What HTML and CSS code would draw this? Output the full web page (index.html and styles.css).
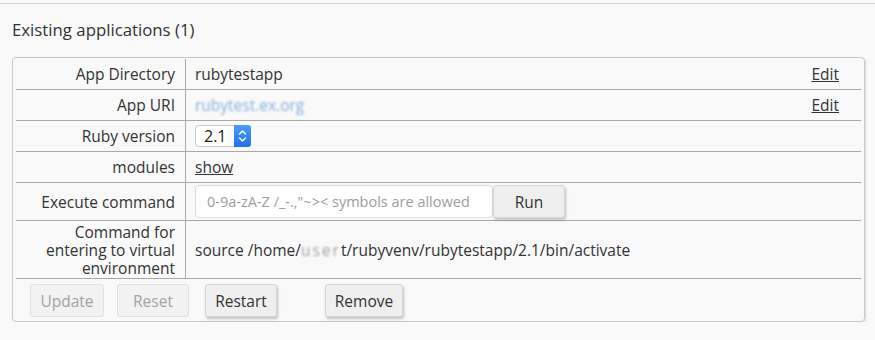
FILE: index.html
```html
<!DOCTYPE html>
<html lang="en">
<head>
    <meta charset="UTF-8">
    <meta name="viewport" content="width=device-width, initial-scale=1.0">
    <title>Ruby applications</title>
    <link rel="stylesheet" href="styles.css">
</head>
<body>
    <div class="section">
        <h2 class="section-title">Existing applications (1)</h2>
        <div class="app-box">
            <table class="app-table">
                <tr>
                    <td class="label">App Directory</td>
                    <td class="value">rubytestapp</td>
                    <td class="edit"><a href="#">Edit</a></td>
                </tr>
                <tr>
                    <td class="label">App URI</td>
                    <td class="value"><span class="blurred uri">rubytest.ex.org</span></td>
                    <td class="edit"><a href="#">Edit</a></td>
                </tr>
                <tr>
                    <td class="label">Ruby version</td>
                    <td class="value" colspan="2">
                        <div class="select">
                            <span class="select-text">2.1</span>
                            <span class="select-arrows">
                                <svg width="9" height="14" viewBox="0 0 9 14">
                                    <path d="M1.5 5 L4.5 2 L7.5 5" fill="none" stroke="#fff" stroke-width="1.4" stroke-linecap="round" stroke-linejoin="round"/>
                                    <path d="M1.5 9 L4.5 12 L7.5 9" fill="none" stroke="#fff" stroke-width="1.4" stroke-linecap="round" stroke-linejoin="round"/>
                                </svg>
                            </span>
                        </div>
                    </td>
                </tr>
                <tr>
                    <td class="label">modules</td>
                    <td class="value" colspan="2"><a href="#">show</a></td>
                </tr>
                <tr class="row-exec">
                    <td class="label">Execute command</td>
                    <td class="value" colspan="2">
                        <div class="exec">
                            <input class="exec-input" type="text" placeholder="0-9a-zA-Z /_-.,&quot;~&gt;&lt; symbols are allowed">
                            <button class="btn btn-run">Run</button>
                        </div>
                    </td>
                </tr>
                <tr class="row-venv">
                    <td class="label">Command for entering to virtual environment</td>
                    <td class="value" colspan="2">source /home/<span class="blurred user">user</span>t/rubyvenv/rubytestapp/2.1/bin/activate</td>
                </tr>
            </table>
            <div class="actions">
                <button class="btn btn-update" disabled>Update</button>
                <button class="btn btn-reset" disabled>Reset</button>
                <button class="btn btn-restart">Restart</button>
                <button class="btn btn-remove">Remove</button>
            </div>
        </div>
    </div>
</body>
</html>
```

FILE: styles.css
```css
body {
    margin: 0;
    background: #f9f9f9;
    color: #333;
    font-family: "Open Sans", "Liberation Sans", sans-serif;
    font-size: 15.5px;
}
.section {
    margin-top: 3px;
    border-top: 1px solid #cfcfcf;
    padding: 0 10px 0 12px;
}
.section-title {
    margin: 14px 0 16px;
    font-size: 16.8px;
    font-weight: normal;
    line-height: 23px;
}
.app-box {
    border: 1px solid #c8c8c8;
    border-radius: 4px;
    box-shadow: 1px 1px 2px rgba(0, 0, 0, 0.12);
    padding: 1px 3px 0;
}
.app-table {
    width: 100%;
    border-collapse: collapse;
}
.app-table td {
    border-bottom: 1px solid #a8a8a8;
    height: 30px;
    padding: 0 10px;
    vertical-align: middle;
    line-height: 18px;
}
.app-table .label {
    width: 149px;
    text-align: right;
    border-right: 1px solid #a8a8a8;
}
.app-table .value {
    padding-left: 9px;
}
.app-table .edit {
    text-align: right;
    padding-right: 22px;
}
a {
    color: #333;
    text-decoration: underline;
}
.blurred {
    filter: blur(1px);
}
.uri {
    color: #86b0df;
}
.user {
    color: #a0a0a0;
    letter-spacing: 2px;
}
.select {
    display: inline-flex;
    align-items: stretch;
    height: 22px;
    border: 1px solid #c9c9c9;
    border-radius: 4px;
    background: #fff;
    vertical-align: middle;
    box-sizing: border-box;
}
.select-text {
    padding: 0 7px 0 8px;
    line-height: 20px;
    font-size: 16px;
    color: #222;
}
.select-arrows {
    width: 17px;
    display: flex;
    justify-content: center;
    align-items: center;
    background: linear-gradient(#4f9bf8, #1f72ea);
    border-radius: 0 3px 3px 0;
    margin: -1px -1px -1px 0;
}
.row-exec td {
    height: 37px;
}
.exec {
    display: flex;
    align-items: center;
}
.exec-input {
    width: 298px;
    height: 33px;
    box-sizing: border-box;
    border: 1px solid #dcdcdc;
    border-radius: 4px;
    background: #fff;
    padding: 0 11px;
    font-family: inherit;
    font-size: 14.5px;
}
.exec-input::placeholder {
    color: #9d9d9d;
}
.row-venv td {
    height: 57px;
}
.row-venv .label {
    padding-left: 4px;
}
.btn {
    height: 33px;
    padding: 0;
    border: 1px solid #d6d6d6;
    border-radius: 3px;
    background: #efefef;
    color: #333;
    font-family: inherit;
    font-size: 15.5px;
    box-shadow: 1px 2px 3px rgba(0, 0, 0, 0.22);
    cursor: pointer;
}
.btn:disabled {
    background: #f2f2f2;
    color: #a3a3a3;
    border-color: #e0e0e0;
    box-shadow: none;
    cursor: default;
}
.btn-run {
    width: 72px;
}
.actions {
    display: flex;
    padding: 5px 0 4px 14px;
}
.btn-update {
    width: 74px;
}
.btn-reset {
    width: 72px;
    margin-left: 13px;
}
.btn-restart {
    width: 72px;
    margin-left: 16px;
}
.btn-remove {
    width: 78px;
    margin-left: 48px;
}
```
